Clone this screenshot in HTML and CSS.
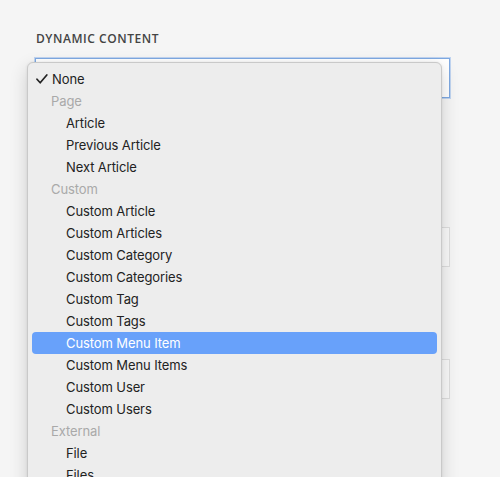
FILE: index.html
```html
<!DOCTYPE html>
<html>
<head>
<meta charset="utf-8">
<link rel="stylesheet" href="styles.css">
</head>
<body>
<div class="page">
  <div class="label">Dynamic Content</div>
  <div class="field focus"></div>
  <div class="label gap">Field</div>
  <div class="field"></div>
  <div class="label gap2">Field</div>
  <div class="field"></div>
</div>
<div class="menu">
  <div class="item top"><svg class="check" width="12" height="10" viewBox="0 0 12 10"><path d="M1 5.2 L4.2 8.8 L10.8 1" fill="none" stroke="#222" stroke-width="1.7" stroke-linecap="round" stroke-linejoin="round"/></svg>None</div>
  <div class="item head">Page</div>
  <div class="item sub">Article</div>
  <div class="item sub">Previous Article</div>
  <div class="item sub">Next Article</div>
  <div class="item head">Custom</div>
  <div class="item sub">Custom Article</div>
  <div class="item sub">Custom Articles</div>
  <div class="item sub">Custom Category</div>
  <div class="item sub">Custom Categories</div>
  <div class="item sub">Custom Tag</div>
  <div class="item sub">Custom Tags</div>
  <div class="item sub active">Custom Menu Item</div>
  <div class="item sub">Custom Menu Items</div>
  <div class="item sub">Custom User</div>
  <div class="item sub">Custom Users</div>
  <div class="item head">External</div>
  <div class="item sub">File</div>
  <div class="item sub">Files</div>
</div>
</body>
</html>
```
FILE: styles.css
```css
html, body {
  margin: 0;
  padding: 0;
  background: #f5f5f5;
  height: 100%;
  overflow: hidden;
}
.page {
  padding: 32px 50px 0 35px;
  font-family: "Open Sans", sans-serif;
}
.label {
  font-size: 12px;
  font-weight: 600;
  text-transform: uppercase;
  color: #444;
  letter-spacing: 0.55px;
  line-height: 13px;
  margin-left: 1px;
}
.gap { margin-top: 103px; visibility: hidden; }
.gap2 { margin-top: 66px; visibility: hidden; }
.field {
  margin-top: 13px;
  height: 38px;
  border: 1px solid #dedede;
  background: #f9f9f9;
}
.field.focus {
  border-color: #7ea9e2;
  box-shadow: 0 0 0 1px rgba(140, 180, 235, 0.5);
  background: #fff;
}
.menu {
  position: absolute;
  left: 27px;
  top: 62px;
  width: 405px;
  height: 460px;
  padding: 5px 4px 4px;
  background: #ededed;
  border: 1px solid #c9c9c9;
  border-radius: 6px;
  box-shadow: 0 6px 18px rgba(0, 0, 0, 0.16), 0 0 3px rgba(0,0,0,0.08);
  font-family: Inter, "Noto Sans", sans-serif;
  font-size: 13px;
  letter-spacing: -0.1px;
  color: #222;
}
.item {
  height: 22px;
  line-height: 22px;
  padding-left: 20px;
  border-radius: 4px;
  position: relative;
  white-space: nowrap;
}
.item.sub { padding-left: 34px; }
.item.head { color: #a9a9a9; padding-left: 19px; }
.item.active {
  background: #68a1fa;
  color: #fff;
}
.check {
  position: absolute;
  left: 4px;
  top: 6px;
}
```
